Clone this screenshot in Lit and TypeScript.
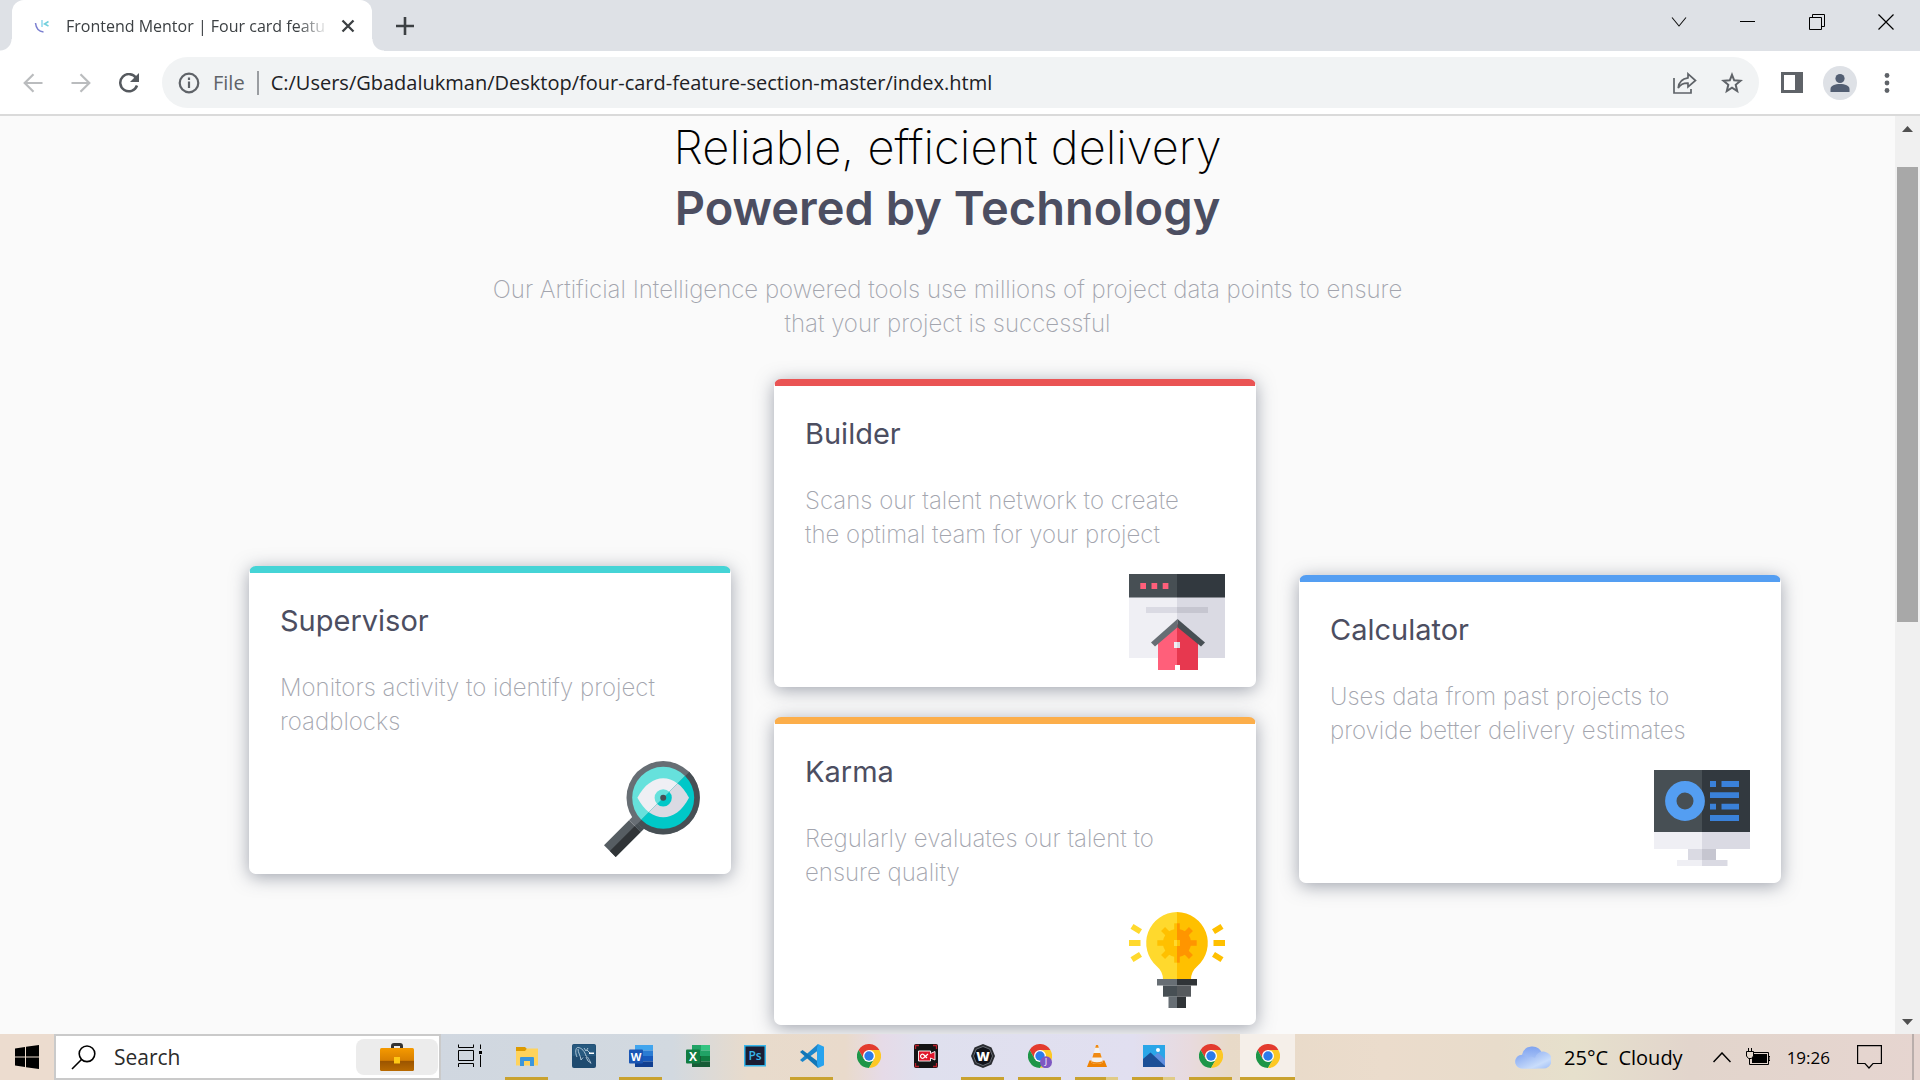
import { LitElement, html, svg, css, nothing, type TemplateResult, type SVGTemplateResult } from "lit";
import { customElement, property } from "lit/decorators.js";
import { styleMap } from "lit/directives/style-map.js";
import { classMap } from "lit/directives/class-map.js";

/* Shared reset for every control in the shell. */
const base = css`
  * {
    box-sizing: border-box;
  }
  button,
  input {
    margin: 0;
    padding: 0;
    border: 0;
    background: none;
    font: inherit;
    color: inherit;
    outline: none;
  }
  svg {
    display: block;
    flex: none;
  }
`;

/* ---------- feature illustrations ---------- */

const supervisorArt = html`<svg width="96" height="96" viewBox="0 0 96 96" aria-hidden="true">
  <defs>
    <clipPath id="lower"><path d="M96 0V96H0z" /></clipPath>
  </defs>
  <path d="M0 84.3 25 59.3 36.7 71 11.7 96z" fill="#565d62" />
  <path d="M5.9 90.1 30.9 65.1 36.7 71 11.7 96z" fill="#303437" />
  <path d="M25 59.3 31 53.3 42.7 65 36.7 71z" fill="#676e74" />
  <path d="M30.9 65.1 37 59 42.7 65 36.7 71z" fill="#474f54" />
  <circle cx="59.2" cy="36.8" r="36.7" fill="#676e74" />
  <circle cx="59.2" cy="36.8" r="31" fill="#66e1dc" />
  <path d="M33.4 36.8C47 10.8 71.5 10.8 85 36.8 71.5 62.8 47 62.8 33.4 36.8z" fill="#efeff4" />
  <circle cx="59.2" cy="36.8" r="8.6" fill="#66e1dc" />
  <g clip-path="url(#lower)">
    <path d="M85.15 10.85A36.7 36.7 0 0 1 33.25 62.75z" fill="#474f54" />
    <circle cx="59.2" cy="36.8" r="31" fill="#00c8c8" />
    <path d="M33.4 36.8C47 10.8 71.5 10.8 85 36.8 71.5 62.8 47 62.8 33.4 36.8z" fill="#dadae3" />
    <circle cx="59.2" cy="36.8" r="8.6" fill="#00c8c8" />
  </g>
  <circle cx="59.2" cy="36.8" r="3" fill="#474f54" />
</svg>`;

const builderArt = html`<svg width="96" height="96" viewBox="0 0 96 96" aria-hidden="true">
  <path d="M0 23H48V84H0z" fill="#efeff4" />
  <path d="M48 23H96V84H48z" fill="#dadae3" />
  <path d="M0 0H48V23.5H0z" fill="#474f54" />
  <path d="M48 0H96V23.5H48z" fill="#32393f" />
  <path d="M11.3 9H17V15H11.3zM22.5 9H28.2V15H22.5zM33.7 9H39.4V15H33.7z" fill="#ff5f7a" />
  <path d="M17 33H48V39H17z" fill="#dadae3" />
  <path d="M48 33H79V39H48z" fill="#c6c6d0" />
  <path d="M29 67 48 50V96H29z" fill="#ff5f7a" />
  <path d="M69 67 48 50V96H69z" fill="#e7384f" />
  <path d="M48.5 45V53.2L26 72.5 22 68.5z" fill="#676e74" />
  <path d="M48.5 45V53.2L72 72.5 76 68.5z" fill="#474f54" />
  <path d="M45 68H48V74H45z" fill="#efeff4" />
  <path d="M48 68H51V74H48z" fill="#dadae3" />
  <path d="M46 91H51V96H46z" fill="#fff" />
</svg>`;

const teeth = [0, 45, 90, 135, 180, 225, 270, 315];
const gear = (fill: string): SVGTemplateResult => svg`<g fill=${fill}>
  <circle cx="48" cy="31" r="14"/>
  ${teeth.map((a) => svg`<path d="M45.2 11.3H50.8V20H45.2z" transform=${`rotate(${a} 48 31)`}/>`)}
</g>`;

const karmaArt = html`<svg width="96" height="96" viewBox="0 0 96 96" aria-hidden="true">
  <defs>
    <clipPath id="right"><path d="M48 0H96V96H48z" /></clipPath>
  </defs>
  <path d="M48 0A31 31 0 0 0 28 54.5Q34 59.5 34 67.5H48z" fill="#ffd92d" />
  <path d="M48 0A31 31 0 0 1 68 54.5Q62 59.5 62 67.5H48z" fill="#ffc000" />
  ${gear("#ffc000")}
  <g clip-path="url(#right)">${gear("#ff9500")}</g>
  <path d="M45 28H48V34H45z" fill="#ffd92d" />
  <path d="M48 28H51V34H48z" fill="#ffc000" />
  <path d="M28 67H48V73.5H28z" fill="#676e74" />
  <path d="M48 67H68V73.5H48z" fill="#303437" />
  <path d="M34 73.5H48V84.7H34z" fill="#474f54" />
  <path d="M48 73.5H62V84.7H48z" fill="#565a5d" />
  <path d="M39.5 84.7H48V96H39.5z" fill="#676e74" />
  <path d="M48 84.7H57V96H48z" fill="#303437" />
  <path d="M0 28H11.5V34H0zM4.5 12 13 17.2 10 22 1.5 16.8zM10 40 13 44.8 4.5 50 1.5 45.2z" fill="#ffd92d" />
  <path d="M84.5 28H96V34H84.5zM91.5 12 94.5 16.8 86 22 83 17.2zM86 40 94.5 45.2 91.5 50 83 44.8z" fill="#ffc000" />
</svg>`;

const calculatorArt = html`<svg width="96" height="96" viewBox="0 0 96 96" aria-hidden="true">
  <path d="M0 0H48V62H0z" fill="#474f54" />
  <path d="M48 0H96V62H48z" fill="#32393f" />
  <path d="M0 62H48V79H0z" fill="#efeff4" />
  <path d="M48 62H96V79H48z" fill="#dadae3" />
  <path d="M34 79H48V90H34z" fill="#dadae3" />
  <path d="M48 79H62V90H48z" fill="#c6c6d0" />
  <path d="M23 90H48V96H23z" fill="#efeff4" />
  <path d="M48 90H73.5V96H48z" fill="#dadae3" />
  <circle cx="31" cy="31" r="14.2" fill="none" stroke="#549ef2" stroke-width="11.4" />
  <path
    d="M56 11H62V17H56zM67.5 11H85V17H67.5zM56 22.2H85V28H56zM56 33.7H62V39.5H56zM67.5 33.7H85V39.5H67.5zM56 45H85V51H56z"
    fill="#3a81d9"
  />
</svg>`;

interface Feature {
  title: string;
  text: string;
  accent: string;
  art: TemplateResult;
}

const features: Record<string, Feature> = {
  supervisor: {
    title: "Supervisor",
    text: "Monitors activity to identify project roadblocks",
    accent: "#45d4d6",
    art: supervisorArt,
  },
  builder: {
    title: "Builder",
    text: "Scans our talent network to create the optimal team for your project",
    accent: "#ea5454",
    art: builderArt,
  },
  karma: {
    title: "Karma",
    text: "Regularly evaluates our talent to ensure quality",
    accent: "#fcae4a",
    art: karmaArt,
  },
  calculator: {
    title: "Calculator",
    text: "Uses data from past projects to provide better delivery estimates",
    accent: "#549ef2",
    art: calculatorArt,
  },
};

@customElement("feature-card")
export class FeatureCard extends LitElement {
  @property({ attribute: false }) feature!: Feature;

  static styles = [
    base,
    css`
      :host {
        display: block;
      }
      .card {
        display: flex;
        flex-direction: column;
        padding: 27px 30px 16px;
        border: 1px solid #fff;
        border-top-width: 7px;
        border-radius: 7px;
        background: #fff;
        box-shadow: 0 3px 18px rgba(70, 78, 97, 0.5);
      }
      .title {
        margin: 0 0 29px;
        font-size: 29px;
        line-height: 42px;
        font-weight: 400;
        color: #4c4e61;
      }
      .text {
        margin: 0 0 22px;
        max-width: 392px;
        font-size: 24px;
        line-height: 34px;
        font-weight: 200;
        color: #a3a5ae;
      }
      .art {
        align-self: flex-end;
      }
    `,
  ];

  render() {
    const f = this.feature;
    return html`<article class="card" style=${styleMap({ borderTopColor: f.accent })}>
      <h2 class="title">${f.title}</h2>
      <p class="text">${f.text}</p>
      <div class="art">${f.art}</div>
    </article>`;
  }
}

@customElement("feature-page")
export class FeaturePage extends LitElement {
  static styles = [
    base,
    css`
      :host {
        display: block;
        overflow: hidden;
        background: #fafafa;
        font-family: Inter, "Open Sans", sans-serif;
      }
      .intro {
        text-align: center;
      }
      .headline {
        margin: 0 0 35px;
        font-size: 47px;
        line-height: 61px;
        font-weight: 200;
        color: #000;
      }
      .strong {
        display: block;
        font-weight: 600;
        color: #4c4e61;
      }
      .lead {
        margin: 0 auto 38px;
        max-width: 940px;
        font-size: 24px;
        line-height: 34px;
        font-weight: 200;
        color: #a3a5ae;
      }
      .grid {
        display: grid;
        grid-template-columns: repeat(3, 1fr);
        align-items: start;
        column-gap: 43px;
        padding: 0 114px 24px 249px;
      }
      .left {
        margin-top: 187px;
      }
      .right {
        margin-top: 196px;
      }
      .middle {
        display: grid;
        gap: 30px;
      }
    `,
  ];

  render() {
    return html`<header class="intro">
        <h1 class="headline">Reliable, efficient delivery <span class="strong">Powered by Technology</span></h1>
        <p class="lead">
          Our Artificial Intelligence powered tools use millions of project data points to ensure that your project is
          successful
        </p>
      </header>
      <section class="grid">
        <feature-card class="left" .feature=${features.supervisor}></feature-card>
        <div class="middle">
          <feature-card .feature=${features.builder}></feature-card>
          <feature-card .feature=${features.karma}></feature-card>
        </div>
        <feature-card class="right" .feature=${features.calculator}></feature-card>
      </section>`;
  }
}

/* ---------- browser chrome ---------- */

@customElement("browser-chrome")
export class BrowserChrome extends LitElement {
  static styles = [
    base,
    css`
      :host {
        display: block;
        font-family: "Open Sans", "Noto Sans", sans-serif;
        background: #fff;
        border-bottom: 2px solid #dadada;
      }
      .strip {
        display: flex;
        height: 51px;
        background: #dee1e6;
      }
      .tab {
        position: relative;
        display: flex;
        align-items: center;
        width: 360px;
        margin-left: 12px;
        padding: 0 17px 0 22px;
        background: #fff;
        border-radius: 12px 12px 0 0;
      }
      .tab::before,
      .tab::after {
        content: "";
        position: absolute;
        bottom: 0;
        width: 12px;
        height: 12px;
      }
      .tab::before {
        left: -12px;
        background: radial-gradient(circle at 0 0, #dee1e6 11px, #fff 12px);
      }
      .tab::after {
        right: -12px;
        background: radial-gradient(circle at 100% 0, #dee1e6 11px, #fff 12px);
      }
      .tab-title {
        flex: 1;
        margin-left: 16px;
        white-space: nowrap;
        font-size: 16px;
        color: #3c4043;
        -webkit-mask-image: linear-gradient(90deg, #000 88%, transparent);
        mask-image: linear-gradient(90deg, #000 88%, transparent);
      }
      .tab-close {
        margin-left: 12px;
      }
      .new-tab {
        display: grid;
        place-items: center;
        width: 66px;
      }
      .controls {
        display: flex;
        margin-left: auto;
        padding-bottom: 8px;
      }
      .control {
        display: grid;
        place-items: center;
        width: 69px;
      }
      .bar {
        display: flex;
        align-items: center;
        height: 63px;
        padding-right: 7px;
      }
      .nav {
        display: flex;
        padding: 0 9px;
      }
      .nav-button {
        display: grid;
        place-items: center;
        width: 48px;
        height: 48px;
      }
      .omnibox {
        flex: 1;
        display: flex;
        align-items: center;
        height: 51px;
        padding: 0 16px;
        border-radius: 26px;
        background: #f1f3f4;
        font-size: 20px;
      }
      .scheme {
        margin: 0 12px 0 13px;
        color: #5f6368;
      }
      .rule {
        width: 2px;
        height: 24px;
        margin-right: 12px;
        background: #9a9da1;
      }
      .url {
        flex: 1;
        min-width: 0;
        color: #202124;
      }
      .omni-actions {
        display: flex;
        gap: 24px;
      }
      .tools {
        display: flex;
        align-items: center;
        gap: 20px;
        padding: 0 16px 0 22px;
      }
      .avatar {
        display: grid;
        place-items: center;
        width: 34px;
        height: 34px;
        border-radius: 50%;
        background: #dee1e6;
      }
      .more {
        padding: 0 7px;
      }
    `,
  ];

  render() {
    return html`<div class="strip">
        <div class="tab">
          <svg width="16" height="16" viewBox="0 0 16 16" fill="none" stroke-width="1.5">
            <path d="M1.5 5C2 10 5 13.5 9.5 14" stroke="#7b7fd0" />
            <path d="M8 2V9" stroke="#8fd9ee" />
            <path d="M14.5 3.5 10.5 6 14.5 8" stroke="#72cfdc" />
          </svg>
          <span class="tab-title">Frontend Mentor | Four card featu</span>
          <button class="tab-close" aria-label="Close tab">
            <svg width="14" height="14" viewBox="0 0 14 14" stroke="#3c4043" stroke-width="2.3">
              <path d="M1.5 1.5 12.5 12.5M12.5 1.5 1.5 12.5" />
            </svg>
          </button>
        </div>
        <button class="new-tab" aria-label="New tab">
          <svg width="18" height="18" viewBox="0 0 18 18" stroke="#3c4043" stroke-width="2.6">
            <path d="M9 0V18M0 9H18" />
          </svg>
        </button>
        <div class="controls">
          <button class="control" aria-label="Search tabs">
            <svg width="16" height="10" viewBox="0 0 16 10" fill="none" stroke="#111" stroke-width="1.1">
              <path d="M1 .5 8 9 15 .5" />
            </svg>
          </button>
          <button class="control" aria-label="Minimize">
            <svg width="15" height="1" viewBox="0 0 15 1"><path d="M0 0H15V1H0z" /></svg>
          </button>
          <button class="control" aria-label="Restore">
            <svg width="16" height="16" viewBox="0 0 16 16" fill="none" stroke="#000">
              <path d="M.5 3.5H12.5V15.5H.5zM3.5 3.5V.5H15.5V12.5H12.5" />
            </svg>
          </button>
          <button class="control" aria-label="Close window">
            <svg width="16" height="16" viewBox="0 0 16 16" stroke="#000" stroke-width="1.2">
              <path d="M.5 .5 15.5 15.5M15.5 .5 .5 15.5" />
            </svg>
          </button>
        </div>
      </div>
      <div class="bar">
        <div class="nav">
          <button class="nav-button" aria-label="Back">
            <svg width="20" height="20" viewBox="0 0 20 20" fill="none" stroke="#babcbe" stroke-width="2.2">
              <path d="M19.5 10H2M10.5 1.2 1.7 10 10.5 18.8" />
            </svg>
          </button>
          <button class="nav-button" aria-label="Forward">
            <svg width="20" height="20" viewBox="0 0 20 20" fill="none" stroke="#babcbe" stroke-width="2.2">
              <path d="M.5 10H18M9.5 1.2 18.3 10 9.5 18.8" />
            </svg>
          </button>
          <button class="nav-button" aria-label="Reload">
            <svg width="22" height="20" viewBox="0 0 22 20">
              <path d="M18.2 5.2A8.6 8.6 0 1 0 19 12.5" fill="none" stroke="#55595e" stroke-width="2.5" />
              <path d="M21 0V9H12z" fill="#55595e" />
            </svg>
          </button>
        </div>
        <div class="omnibox">
          <svg width="22" height="22" viewBox="0 0 22 22" fill="none" stroke="#5f6368" stroke-width="2.2">
            <circle cx="11" cy="11" r="9.3" />
            <path d="M11 9.5V16M11 5.5V8" />
          </svg>
          <span class="scheme">File</span>
          <span class="rule"></span>
          <input
            class="url"
            type="text"
            aria-label="Address"
            .value=${"C:/Users/Gbadalukman/Desktop/four-card-feature-section-master/index.html"}
          />
          <span class="omni-actions">
            <button aria-label="Share">
              <svg width="24" height="22" viewBox="0 0 24 22" fill="none" stroke="#5f6368" stroke-width="1.7">
                <path d="M1 6V21H18V17" />
                <path d="M15 1.8 22.5 8.5 15 15V11.2C10.5 11 7.5 12.5 5.2 16 5.8 10 9.5 6.5 15 5.8z" />
              </svg>
            </button>
            <button aria-label="Bookmark">
              <svg width="22" height="22" viewBox="0 0 22 22" fill="none" stroke="#5f6368" stroke-width="2">
                <path
                  d="M11 2.8 13.2 8.3 19.5 8.8 14.7 12.8 16.2 19 11 15.7 5.8 19 7.3 12.8 2.5 8.8 8.8 8.3z"
                />
              </svg>
            </button>
          </span>
        </div>
        <div class="tools">
          <button aria-label="Side panel">
            <svg width="22" height="21" viewBox="0 0 22 21">
              <path d="M0 0H22V21H0zM3 3V18H14V3z" fill="#5f6368" fill-rule="evenodd" />
            </svg>
          </button>
          <button class="avatar" aria-label="Profile">
            <svg width="20" height="20" viewBox="0 0 20 20" fill="#535f73">
              <circle cx="10" cy="5.5" r="4.6" />
              <path d="M.5 19V16C.5 12.5 5 11 10 11S19.5 12.5 19.5 16V19z" />
            </svg>
          </button>
          <button class="more" aria-label="Menu">
            <svg width="6" height="22" viewBox="0 0 6 22" fill="#5f6368">
              <circle cx="3" cy="3.5" r="2.4" />
              <circle cx="3" cy="11" r="2.4" />
              <circle cx="3" cy="18.5" r="2.4" />
            </svg>
          </button>
        </div>
      </div>`;
  }
}

@customElement("page-scrollbar")
export class PageScrollbar extends LitElement {
  /* Thumb offset and length, as percentages of the track. */
  @property({ type: Number }) start = 0;
  @property({ type: Number }) size = 100;

  static styles = [
    base,
    css`
      :host {
        display: flex;
        flex-direction: column;
        width: 25px;
        background: #f0f0f0;
      }
      .arrow {
        display: grid;
        place-items: center;
        height: 25px;
      }
      .track {
        flex: 1;
        padding: 0 2px;
        display: flex;
        flex-direction: column;
      }
      .thumb {
        background: #a8a8a8;
      }
    `,
  ];

  render() {
    return html`<button class="arrow" aria-label="Scroll up">
        <svg width="11" height="6" viewBox="0 0 11 6"><path d="M0 6 5.5 0 11 6z" fill="#505050" /></svg>
      </button>
      <div class="track">
        <div style=${styleMap({ height: `${this.start}%` })}></div>
        <div class="thumb" style=${styleMap({ height: `${this.size}%` })}></div>
      </div>
      <button class="arrow" aria-label="Scroll down">
        <svg width="11" height="6" viewBox="0 0 11 6"><path d="M0 0 5.5 6 11 0z" fill="#505050" /></svg>
      </button>`;
  }
}

/* ---------- taskbar ---------- */

const icon = (body: SVGTemplateResult) =>
  html`<svg width="24" height="24" viewBox="0 0 24 24" aria-hidden="true">${body}</svg>`;

const chromeBody = svg`
  <path d="M1.6 6A12 12 0 0 1 22.4 6H12L6.8 15z" fill="#e33b2e"/>
  <path d="M1.6 6A12 12 0 0 0 12 24L17.2 15 12 12 6.8 15z" fill="#1e9648"/>
  <path d="M22.4 6A12 12 0 0 1 12 24L17.2 15 12 6z" fill="#fdc824"/>
  <circle cx="12" cy="12" r="6" fill="#fff"/>
  <circle cx="12" cy="12" r="4.7" fill="#2c7bea"/>`;

const chromeIcon = icon(chromeBody);

const chromeProfileIcon = icon(svg`${chromeBody}
  <circle cx="18" cy="18.2" r="6" fill="#7e57c2"/>
  <text x="18" y="21.4" font-size="9" text-anchor="middle" fill="#fff" font-family="Open Sans, sans-serif">J</text>`);

const explorerIcon = icon(svg`
  <path d="M1 3H10L12 5V9H1z" fill="#dd9a00"/>
  <path d="M1 7H10L12 4.5H23V21.5H1z" fill="#ffd35c"/>
  <path d="M5 22V14Q5 13 6 13H18Q19 13 19 14V22H15V17H9V22z" fill="#3c96dc"/>`);

const mysqlIcon = icon(svg`
  <rect width="24" height="24" rx="2" fill="#1f4b70"/>
  <path d="M2 .5H22Q23.500 .5 23.500 2V12H.5V2Q.5 .5 2 .5z" fill="#27597f"/>
  <path d="M5 13C3 9 3.500 4 5.500 3.500 10 3.500 13 8 14 12 16 13 17 15 19 19.500M6 5C6 9 8.500 11 9 16L11 13.500M14 13 16 17 19 19M12 4 14 7 16 4M15 6 18 9" fill="none" stroke="#b9cfdf" stroke-width=".9"/>
  <path d="M17 8.500H22V10H17z" fill="#fff"/>`);

const wordIcon = icon(svg`
  <path d="M6 1H24V6.500H6z" fill="#41a5ee"/>
  <path d="M6 6.500H24V12H6z" fill="#2b7cd3"/>
  <path d="M6 12H24V17.500H6z" fill="#185abd"/>
  <path d="M6 17.500H24V23H6z" fill="#103f91"/>
  <rect y="5.5" width="14" height="14" rx="1" fill="#1a56b4"/>
  <text x="7" y="16.5" font-size="11" font-weight="700" text-anchor="middle" fill="#fff" font-family="Open Sans, sans-serif">W</text>`);

const excelIcon = icon(svg`
  <path d="M6 1H15V12H6z" fill="#21a366"/>
  <path d="M15 1H24V6.500H15z" fill="#33c481"/>
  <path d="M15 6.500H24V12H15z" fill="#21a366"/>
  <path d="M6 12H15V23H6z" fill="#185c37"/>
  <path d="M15 12H24V17.500H15z" fill="#107c41"/>
  <path d="M15 17.500H24V23H15z" fill="#185c37"/>
  <rect y="5.5" width="14" height="14" rx="1" fill="#107c41"/>
  <text x="7" y="16.5" font-size="12" font-weight="700" text-anchor="middle" fill="#fff" font-family="Open Sans, sans-serif">X</text>`);

const photoshopIcon = icon(svg`
  <rect x="1" y="1" width="22" height="21.5" fill="#36b6ea"/>
  <rect x="2.5" y="2.5" width="19" height="18.5" fill="#1b1d33"/>
  <text x="12" y="16" font-size="12" font-weight="600" text-anchor="middle" fill="#36b6ea" font-family="Open Sans, sans-serif">Ps</text>`);

const vscodeIcon = icon(svg`
  <path d="M0 16 18 0V6.500L2.500 18z" fill="#1b86cc"/>
  <path d="M0 8 2.500 6 18 17.500V24z" fill="#1277b8"/>
  <path d="M18 0 24 2.800V21.200L18 24 17 20V4z" fill="#27a3ee"/>`);

const recorderIcon = icon(svg`
  <rect width="24" height="24" rx="2" fill="#141414"/>
  <path d="M1.500 5V1.500H5M19 1.500H22.500V5M22.500 19V22.500H19M5 22.500H1.500V19" fill="none" stroke="#b81f2a" stroke-width="1.3"/>
  <path d="M4.500 7H16.500V9.500L21 7.500V16L16.500 14V17H4.500z" fill="#e0162b" stroke="#fff" stroke-width=".9"/>
  <path d="M14 10 9.500 14A2 2 0 1 1 9.500 10.500L13 14" fill="none" stroke="#fff" stroke-width="1.2"/>`);

const wIcon = icon(svg`
  <path d="M12 0 20.500 3.500 24 12 20.500 20.500 12 24 3.500 20.500 0 12 3.500 3.500z" fill="#2a2c31"/>
  <path d="M12 2.500 18.800 5.200 21.500 12 18.800 18.800 12 21.500 5.200 18.800 2.500 12 5.200 5.200z" fill="#101218" stroke="#777c84" stroke-width=".8"/>
  <text x="12" y="16.5" font-size="13" font-weight="800" text-anchor="middle" fill="#fff" font-family="Open Sans, sans-serif">W</text>`);

const vlcIcon = icon(svg`
  <path d="M4.500 16.500H19.500L22 23H2z" fill="#ef8200"/>
  <path d="M11 1H13L18 18.500Q12 21.500 6 18.500z" fill="#f4f1ec"/>
  <path d="M10.200 3.800 11 1H13L13.800 3.800zM8.700 9H15.300L16.700 13.500H7.400zM6 18.500 6.300 17.300Q12 19 17.700 17.300L18 18.500Q12 21.500 6 18.500z" fill="#f08a12"/>`);

const photosIcon = icon(svg`
  <path d="M1 1H23V23H1z" fill="#2aa6e8"/>
  <path d="M12 12 16 8.500 23 15V23H12z" fill="#5f8fe0"/>
  <path d="M1 15 8.500 8.500 23 22V23H1z" fill="#1c4f96"/>
  <circle cx="16" cy="6" r="2" fill="#fff"/>`);

const taskViewIcon = icon(svg`
  <g fill="none" stroke="#000">
    <path d="M.5 .5V3.500H15.500V.5M.5 6.500H15.500V16.500H.5zM.5 23V19.500H15.500V23M22.500 .5V5M22.500 11V23"/>
  </g>
  <path d="M21 7H24V10H21z"/>`);

interface TaskItem {
  name: string;
  art: TemplateResult;
  running?: boolean;
  stacked?: boolean;
  active?: boolean;
}

const tasks: TaskItem[] = [
  { name: "Task view", art: taskViewIcon },
  { name: "File Explorer", art: explorerIcon, running: true },
  { name: "MySQL Workbench", art: mysqlIcon },
  { name: "Word", art: wordIcon, running: true },
  { name: "Excel", art: excelIcon },
  { name: "Photoshop", art: photoshopIcon },
  { name: "Visual Studio Code", art: vscodeIcon, running: true },
  { name: "Chrome", art: chromeIcon },
  { name: "Screen recorder", art: recorderIcon },
  { name: "W", art: wIcon, running: true },
  { name: "Chrome profile J", art: chromeProfileIcon, running: true },
  { name: "VLC", art: vlcIcon, running: true, stacked: true },
  { name: "Photos", art: photosIcon, running: true, stacked: true },
  { name: "Chrome window", art: chromeIcon, running: true },
  { name: "Chrome current window", art: chromeIcon, running: true, active: true },
];

@customElement("task-bar")
export class TaskBar extends LitElement {
  static styles = [
    base,
    css`
      :host {
        display: flex;
        height: 46px;
        font-family: "Open Sans", "Noto Sans", sans-serif;
        color: #000;
        background: linear-gradient(
          90deg,
          #ecdccf 0,
          #ecdccf 3%,
          #d0d7e0 22%,
          #d2d9e0 35%,
          #e8dbcc 39%,
          #e9dacb 44%,
          #e6dbe8 46%,
          #dfe0ee 48%,
          #e1dff0 59%,
          #e8dade 62%,
          #e8dac8 64%,
          #ebdccc 72%,
          #e8dccb 78%,
          #e6e0cc 82%,
          #e2d5cc 88%,
          #e6d5d0 100%
        );
      }
      .start {
        display: grid;
        place-items: center;
        width: 54px;
      }
      .search {
        display: flex;
        align-items: center;
        width: 387px;
        padding: 0 1px 0 15px;
        border: 2px solid #cacaca;
        background: #fff;
      }
      .query {
        flex: 1;
        min-width: 0;
        margin-left: 18px;
        font-size: 21px;
      }
      .query::placeholder {
        color: #2b2b2b;
        opacity: 1;
      }
      .badge {
        display: grid;
        place-items: center;
        width: 82px;
        height: 36px;
        border-radius: 8px;
        background: #ececec;
      }
      .tasks {
        display: flex;
      }
      .task {
        display: grid;
        grid-template-rows: 43px 3px;
        justify-items: center;
        align-items: center;
        width: 57px;
      }
      .active {
        width: 55px;
        margin-left: 1px;
        background: #f5efe9;
      }
      .mark {
        width: 43px;
        height: 3px;
        background: #c9a22f;
      }
      .active .mark {
        width: 100%;
      }
      .stacked .mark {
        background: linear-gradient(90deg, #c9a22f 31px, #e0cb86 31px);
      }
      .tray {
        display: flex;
        align-items: center;
        margin-left: auto;
        padding-right: 6px;
      }
      .weather {
        display: flex;
        align-items: center;
        gap: 13px;
        font-size: 20px;
        white-space: pre;
      }
      .chevron {
        margin-left: 30px;
      }
      .battery {
        margin: 0 17px 0 15px;
      }
      .clock {
        font-size: 17px;
      }
      .notes {
        margin: 0 30px 0 27px;
      }
      .desktop {
        width: 2px;
        height: 46px;
        background: #b9aeab;
      }
    `,
  ];

  render() {
    return html`<button class="start" aria-label="Start">
        <svg width="24" height="24" viewBox="0 0 24 24">
          <path d="M0 3.400 10 2V11.500H0zM11 1.800 24 0V11.500H11zM0 12.500H10V22L0 20.600zM11 12.500H24V24L11 22.200z" />
        </svg>
      </button>
      <label class="search">
        <svg width="25" height="25" viewBox="0 0 25 25" fill="none" stroke="#000" stroke-width="1.6">
          <circle cx="16" cy="8.8" r="7.8" />
          <path d="M10.5 14.5 1 24" />
        </svg>
        <input class="query" type="text" placeholder="Search" aria-label="Search" />
        <span class="badge">
          <svg width="34" height="28" viewBox="0 0 34 28">
            <defs>
              <linearGradient id="leather" x1="0" y1="0" x2="0" y2="1">
                <stop offset="0" stop-color="#f59a00" />
                <stop offset=".54" stop-color="#d87f00" />
                <stop offset=".56" stop-color="#9a5400" />
                <stop offset="1" stop-color="#b96a00" />
              </linearGradient>
            </defs>
            <path d="M12.5 5V3Q12.5 1.5 14 1.5H20Q21.5 1.5 21.5 3V5" fill="none" stroke="#333" stroke-width="3" />
            <rect y="5" width="34" height="23" rx="1.5" fill="url(#leather)" />
            <path d="M14 14H20V20.5H14z" fill="#ffc814" />
          </svg>
        </span>
      </label>
      <nav class="tasks">
        ${tasks.map(
          (t) => html`<button
            class=${classMap({ task: true, active: !!t.active, stacked: !!t.stacked })}
            aria-label=${t.name}
          >
            ${t.art}${t.running ? html`<span class="mark"></span>` : nothing}
          </button>`,
        )}
      </nav>
      <div class="tray">
        <button class="weather">
          <svg width="36" height="24" viewBox="0 0 36 24">
            <defs>
              <linearGradient id="sky" x1="0" y1="0" x2="0" y2="1">
                <stop offset="0" stop-color="#7fa3f0" />
                <stop offset="1" stop-color="#c3d8fa" />
              </linearGradient>
              <linearGradient id="mist" x1="0" y1="0" x2="1" y2="1">
                <stop offset="0" stop-color="#7b9fee" />
                <stop offset=".7" stop-color="#c9ddfb" />
                <stop offset="1" stop-color="#9dbcf6" />
              </linearGradient>
            </defs>
            <path d="M7 23.5A6.8 6.8 0 0 1 7 9.7 10.5 10.5 0 0 1 27 8L22 23.500z" fill="url(#sky)" />
            <path d="M7 23.5A6.8 6.8 0 1 1 12.5 12.5 9 9 0 0 1 20 13 8.5 8.5 0 1 1 27.5 23.5z" fill="url(#mist)" />
          </svg>
          <span>25°C  Cloudy</span>
        </button>
        <button class="chevron" aria-label="Show hidden icons">
          <svg width="18" height="11" viewBox="0 0 18 11" fill="none" stroke="#000" stroke-width="1.5">
            <path d="M.5 10 9 1 17.5 10" />
          </svg>
        </button>
        <svg class="battery" width="24" height="18" viewBox="0 0 24 18">
          <path d="M5 4.5H22.5V16.5H3.5V10M22.5 8.5H24V12.5H22.5" fill="none" stroke="#000" />
          <path d="M6 6H21V15H6z" />
          <path d="M.5 3.5H7.5V8L5.5 10.5H2.5L.5 8zM2.5 3V0M5.5 3V0" fill="#e4d8cd" stroke="#000" />
        </svg>
        <span class="clock">19:26</span>
        <button class="notes" aria-label="Notifications">
          <svg width="25" height="24" viewBox="0 0 25 24" fill="none" stroke="#000" stroke-width="1.2">
            <path d="M.6 .6H24.4V18.5H16L12 23 8 18.5H.6z" />
          </svg>
        </button>
        <span class="desktop"></span>
      </div>`;
  }
}

@customElement("app-root")
export class AppRoot extends LitElement {
  static styles = [
    base,
    css`
      :host {
        display: grid;
        grid-template-rows: auto minmax(0, 1fr) auto;
        height: 100vh;
        overflow: hidden;
      }
      .viewport {
        display: grid;
        grid-template-columns: minmax(0, 1fr) auto;
        min-height: 0;
      }
    `,
  ];

  render() {
    return html`<browser-chrome></browser-chrome>
      <main class="viewport">
        <feature-page></feature-page>
        <page-scrollbar .start=${3} .size=${52.4}></page-scrollbar>
      </main>
      <task-bar></task-bar>`;
  }
}
